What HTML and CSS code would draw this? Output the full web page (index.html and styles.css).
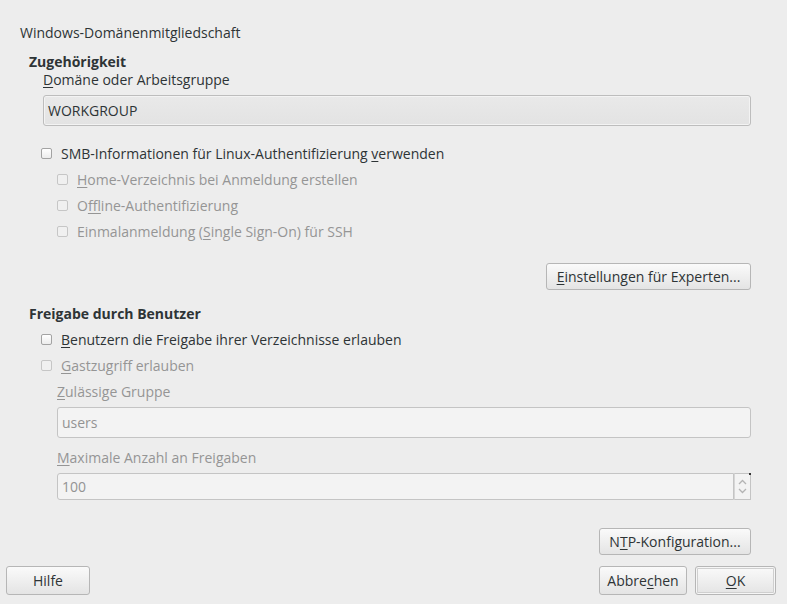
FILE: index.html
```html
<!DOCTYPE html>
<html lang="de">
<head>
<meta charset="utf-8">
<title>Windows-Domänenmitgliedschaft</title>
<link rel="stylesheet" href="styles.css">
</head>
<body>
<div class="window">
  <div class="content">
    <div class="title">Windows-Domänenmitgliedschaft</div>

    <div class="section-head">Zugehörigkeit</div>
    <div class="block">
      <div class="field-label"><u>D</u>omäne oder Arbeitsgruppe</div>
      <div class="input input-combo">WORKGROUP</div>

      <div class="check-row main">
        <span class="checkbox"></span>
        <span class="check-label">SMB-Informationen für Linux-Authentifizierung <u>v</u>erwenden</span>
      </div>
      <div class="sub">
        <div class="check-row disabled">
          <span class="checkbox"></span>
          <span class="check-label"><u>H</u>ome-Verzeichnis bei Anmeldung erstellen</span>
        </div>
        <div class="check-row disabled">
          <span class="checkbox"></span>
          <span class="check-label">O<u>ff</u>line-Authentifizierung</span>
        </div>
        <div class="check-row disabled">
          <span class="checkbox"></span>
          <span class="check-label">Einmalanmeldung (<u>S</u>ingle Sign-On) für SSH</span>
        </div>
      </div>
    </div>

    <div class="btn-line">
      <button class="btn btn-expert"><u>E</u>instellungen für Experten...</button>
    </div>

    <div class="section-head second">Freigabe durch Benutzer</div>
    <div class="block">
      <div class="check-row main first">
        <span class="checkbox"></span>
        <span class="check-label"><u>B</u>enutzern die Freigabe ihrer Verzeichnisse erlauben</span>
      </div>
      <div class="check-row main disabled">
        <span class="checkbox"></span>
        <span class="check-label"><u>G</u>astzugriff erlauben</span>
      </div>
      <div class="sub disabled">
        <div class="field-label group-label"><u>Z</u>ulässige Gruppe</div>
        <div class="input input-off">users</div>
        <div class="field-label max-label"><u>M</u>aximale Anzahl an Freigaben</div>
        <div class="spin">
          <div class="input input-off spin-entry">100</div>
          <div class="spin-buttons">
            <svg width="9" height="6" viewBox="0 0 9 6"><path d="M1 5 L4.5 1.5 L8 5" fill="none" stroke="#b4b4b4" stroke-width="1.3"/></svg>
            <svg width="9" height="6" viewBox="0 0 9 6"><path d="M1 1 L4.5 4.5 L8 1" fill="none" stroke="#b4b4b4" stroke-width="1.3"/></svg>
          </div>
        </div>
      </div>
    </div>

    <div class="btn-line ntp-line">
      <button class="btn btn-ntp">N<u>T</u>P-Konfiguration...</button>
    </div>
  </div>

  <div class="footer">
    <button class="btn btn-foot btn-help">Hilfe</button>
    <div class="footer-right">
      <button class="btn btn-foot btn-cancel">Abbre<u>c</u>hen</button>
      <button class="btn btn-foot btn-ok"><u>O</u>K</button>
    </div>
  </div>
</div>
</body>
</html>
```

FILE: styles.css
```css
html, body {
  margin: 0;
  padding: 0;
}
body {
  background: #ededed;
  font-family: "Open Sans", "DejaVu Sans", sans-serif;
  font-size: 14px;
  color: #2e3436;
}
.window {
  width: 787px;
  height: 604px;
  display: flex;
  flex-direction: column;
  box-sizing: border-box;
}
.content {
  padding: 24px 36px 0 20px;
  display: flex;
  flex-direction: column;
}
u {
  text-decoration: underline;
  text-underline-offset: 2px;
  text-decoration-thickness: 1px;
}
.title {
  height: 18px;
  line-height: 18px;
}
.section-head {
  margin-top: 11px;
  margin-left: 9px;
  height: 18px;
  line-height: 18px;
  font-weight: 700;
}
.section-head.second {
  margin-top: 15px;
}
.block {
  margin-left: 21px;
  display: flex;
  flex-direction: column;
}
.field-label {
  margin-left: 2px;
  height: 18px;
  line-height: 18px;
}
.input {
  margin-top: 6px;
  margin-left: 2px;
  height: 31px;
  box-sizing: border-box;
  border: 1px solid #bdbdbd;
  border-radius: 3px;
  padding-left: 4px;
  line-height: 29px;
}
.input-combo {
  background: linear-gradient(#e9e9e9, #e3e3e3);
  box-shadow: inset 0 0 0 1px #f3f3f3;
}
.input-off {
  background: #f3f3f3;
  border-color: #c4c4c4;
  color: #939393;
}
.check-row {
  height: 26px;
  display: flex;
  align-items: center;
}
.check-row.main {
  margin-top: 14px;
}
.check-row.main.first {
  margin-top: 3px;
}
.check-row.main.disabled {
  margin-top: 0;
}
.checkbox {
  width: 11px;
  height: 11px;
  box-sizing: border-box;
  border: 1px solid #a3a3a3;
  border-radius: 2px;
  background: linear-gradient(#ffffff, #ececec);
  margin-right: 9px;
  flex: none;
}
.disabled .checkbox {
  border-color: #c6c6c6;
  background: #f0f0f0;
}
.disabled, .disabled .check-label {
  color: #959595;
}
.sub {
  margin-left: 16px;
  display: flex;
  flex-direction: column;
}
.sub .field-label {
  margin-left: 0;
}
.sub .input {
  margin-left: 0;
}
.group-label {
  margin-top: 5px;
}
.max-label {
  margin-top: 11px;
}
.spin {
  margin-top: 6px;
  display: flex;
  height: 27px;
}
.spin .spin-entry {
  margin-top: 0;
  flex: 1;
  height: 27px;
  line-height: 25px;
  border-radius: 3px 0 0 3px;
}
.spin-buttons {
  width: 17px;
  box-sizing: border-box;
  border: 1px solid #c4c4c4;
  border-left-color: #d6d6d6;
  background: #f3f3f3;
  display: flex;
  flex-direction: column;
  align-items: center;
  justify-content: space-around;
  padding: 3px 0;
  position: relative;
}
.spin-buttons::after {
  content: "";
  position: absolute;
  right: -1px;
  top: -1px;
  width: 2px;
  height: 2px;
  background: #333;
}
.btn-line {
  display: flex;
  justify-content: flex-end;
  margin-top: 19px;
}
.ntp-line {
  margin-top: 28px;
}
.btn {
  font-family: inherit;
  font-size: 14px;
  color: #2e3436;
  height: 27px;
  box-sizing: border-box;
  border: 1px solid #b6b6b6;
  border-radius: 3px;
  background: linear-gradient(#fafafa, #e4e4e4);
  padding: 0 4px;
  margin: 0;
  line-height: 25px;
  cursor: default;
}
.btn-expert {
  width: 205px;
}
.btn-ntp {
  width: 152px;
  margin-right: 0;
}
.footer {
  margin-top: 11px;
  padding: 0 11px 0 6px;
  display: flex;
  justify-content: space-between;
}
.footer-right {
  display: flex;
  gap: 8px;
}
.btn-foot {
  height: 29px;
  line-height: 27px;
}
.btn-help {
  width: 84px;
}
.btn-cancel {
  width: 88px;
}
.btn-ok {
  width: 81px;
  box-shadow: inset 0 0 0 1px #f6f6f6, inset 0 0 0 2px #cfcfcf;
}
```
